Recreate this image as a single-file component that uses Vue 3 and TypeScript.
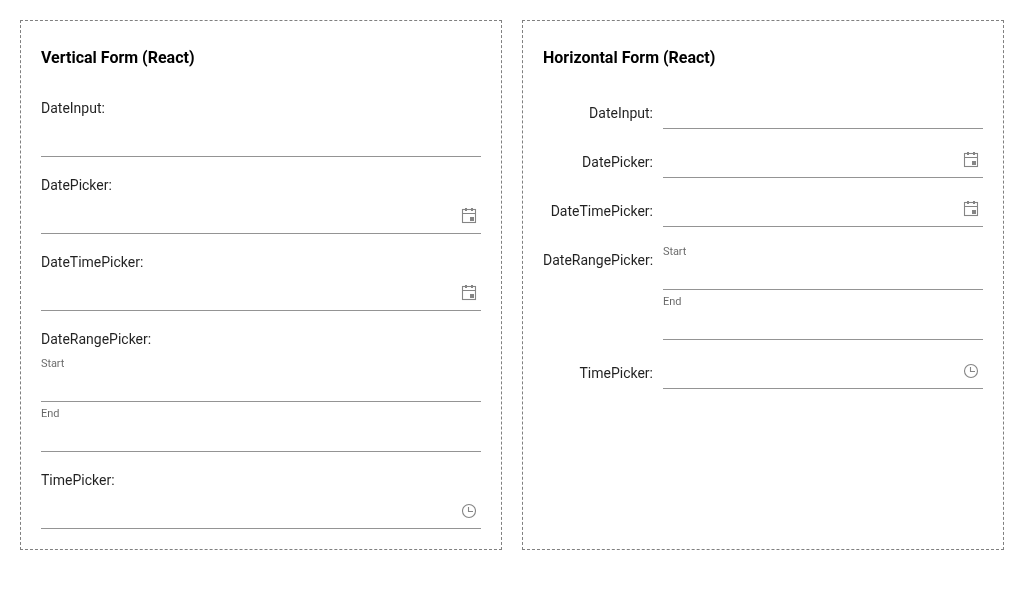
<script setup lang="ts">
type Icon = 'calendar' | 'clock'

interface Field {
  label: string
  icon?: Icon
  parts?: string[]
}

interface Form {
  title: string
  layout: 'vertical' | 'horizontal'
}

const forms: Form[] = [
  { title: 'Vertical Form (React)', layout: 'vertical' },
  { title: 'Horizontal Form (React)', layout: 'horizontal' },
]

const fields: Field[] = [
  { label: 'DateInput:' },
  { label: 'DatePicker:', icon: 'calendar' },
  { label: 'DateTimePicker:', icon: 'calendar' },
  { label: 'DateRangePicker:', parts: ['Start', 'End'] },
  { label: 'TimePicker:', icon: 'clock' },
]
</script>

<template>
  <main class="page">
    <section v-for="form in forms" :key="form.title" class="panel" :class="form.layout">
      <h1 class="title">{{ form.title }}</h1>
      <div class="fields">
        <div v-for="field in fields" :key="field.label" class="field">
          <div class="label">{{ field.label }}</div>
          <div v-if="field.parts" class="range">
            <div v-for="part in field.parts" :key="part" class="part">{{ part }}</div>
          </div>
          <div v-else class="control">
            <svg v-if="field.icon === 'calendar'" class="icon" width="14" height="15" viewBox="0 0 14 15">
              <rect x="0.5" y="1.5" width="13" height="13" fill="none" stroke="currentColor" stroke-width="1.1" />
              <path d="M1 5h12v1H1zM3 0h2v3H3zM9 0h2v3H9zM8 9h4v4H8z" fill="currentColor" />
            </svg>
            <svg v-else-if="field.icon === 'clock'" class="icon clock" width="14" height="14" viewBox="0 0 14 14">
              <circle cx="7" cy="7" r="6.5" fill="none" stroke="currentColor" stroke-width="1.1" />
              <path d="M6.5 3v4.5H11" fill="none" stroke="currentColor" stroke-width="1.1" />
            </svg>
          </div>
        </div>
      </div>
    </section>
  </main>
</template>

<style>
body {
  background: #fff;
}
</style>

<style scoped>
.page {
  display: flex;
  gap: 20px;
  padding: 20px;
  font-family: Roboto, sans-serif;
  will-change: transform;
}

.panel {
  box-sizing: border-box;
  width: 482px;
  height: 530px;
  padding: 20px;
  border: 1px dashed #808080;
}

.title {
  margin: 7px 0 31px;
  font-size: 16px;
  font-weight: 700;
  line-height: 19px;
  color: #000;
}

.fields {
  display: grid;
  gap: 18px;
}

.field {
  display: grid;
  gap: 8px;
}

.horizontal .field {
  grid-template-columns: 110px 1fr;
  gap: 10px;
}

.label {
  font-size: 14px;
  line-height: 20px;
  color: rgba(0, 0, 0, 0.87);
}

.horizontal .label {
  padding-top: 5px;
  text-align: right;
  white-space: nowrap;
}

.control,
.part {
  box-sizing: border-box;
  border-bottom: 1px solid #949494;
}

.control {
  display: flex;
  justify-content: flex-end;
  height: 31px;
  padding: 5px 5px 0 0;
}

.icon {
  overflow: visible;
  color: #858585;
}

.clock {
  margin-top: 1px;
}

.range {
  display: grid;
  gap: 5px;
}

.part {
  height: 45px;
  font-size: 11px;
  letter-spacing: -0.1px;
  line-height: 13px;
  color: rgba(0, 0, 0, 0.6);
}
</style>
